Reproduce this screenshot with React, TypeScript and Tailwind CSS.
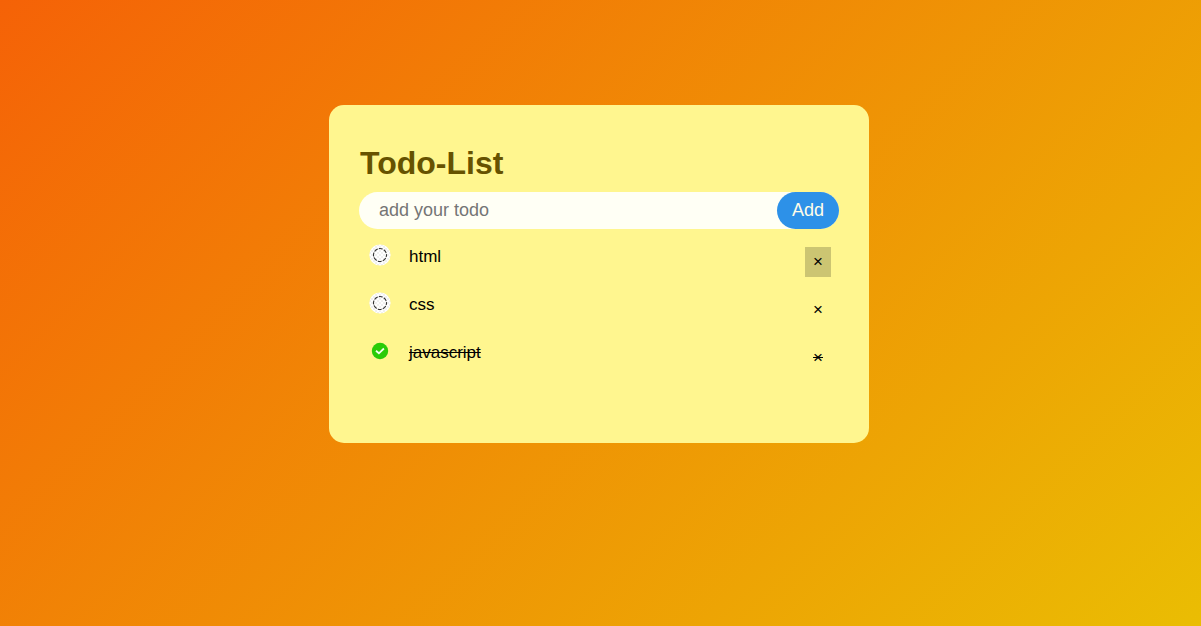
import { useState } from "react";

type Todo = { id: number; text: string; done: boolean };

const initialTodos: Todo[] = [
  { id: 1, text: "html", done: false },
  { id: 2, text: "css", done: false },
  { id: 3, text: "javascript", done: true },
];

function OpenIcon() {
  return (
    <svg width="22" height="22" viewBox="0 0 22 22" aria-hidden="true">
      <defs>
        <pattern id="checks" width="4" height="4" patternUnits="userSpaceOnUse">
          <rect width="4" height="4" fill="#ffffff" />
          <rect width="2" height="2" fill="#f0f0f0" />
          <rect x="2" y="2" width="2" height="2" fill="#f0f0f0" />
        </pattern>
      </defs>
      <circle cx="11" cy="11" r="10.6" fill="url(#checks)" />
      <circle
        cx="11"
        cy="11"
        r="6.5"
        fill="none"
        stroke="#333333"
        strokeWidth="1.1"
        strokeDasharray="3.8 1.305"
        strokeDashoffset="1.9"
      />
    </svg>
  );
}

function DoneIcon() {
  return (
    <svg width="22" height="22" viewBox="0 0 22 22" aria-hidden="true">
      <circle cx="11" cy="11" r="8.2" fill="#2acb08" />
      <path
        d="M7 10.8 L9.9 13.3 L14.9 8.5"
        fill="none"
        stroke="#f4fff0"
        strokeWidth="1.8"
      />
    </svg>
  );
}

export default function App() {
  const [todos, setTodos] = useState(initialTodos);
  const [draft, setDraft] = useState("");

  const toggle = (id: number) =>
    setTodos(todos.map((t) => (t.id === id ? { ...t, done: !t.done } : t)));

  const add = () => {
    if (!draft.trim()) return;
    setTodos([...todos, { id: Date.now(), text: draft, done: false }]);
    setDraft("");
  };

  return (
    <div className="min-h-screen bg-linear-[135deg,#f56207,#eabd03] pt-[105px] pr-[3px] font-['Liberation_Sans',Arial,sans-serif]">
      <main className="mx-auto w-full max-w-[540px] rounded-[15px] bg-[#fff68f] px-[30px] pt-10 pb-[65px]">
        <h1 className="mb-[11px] pl-px text-[32px] leading-9 font-bold text-[#665200]">
          Todo-List
        </h1>
        <form
          className="flex rounded-full bg-[#fffff5]"
          onSubmit={(e) => {
            e.preventDefault();
            add();
          }}
        >
          <input
            type="text"
            aria-label="New todo"
            placeholder="add your todo"
            value={draft}
            onChange={(e) => setDraft(e.target.value)}
            className="min-w-0 flex-1 bg-transparent pb-[2px] pl-5 text-[18px] leading-5 outline-none placeholder:text-[#757575]"
          />
          <button
            type="submit"
            className="h-[37px] rounded-full bg-[#2d91e8] px-[15px] pb-[2px] text-[18px] leading-5 text-[#fffde8]"
          >
            Add
          </button>
        </form>
        <ul className="mt-[5px]">
          {todos.map((todo, i) => (
            <li
              key={todo.id}
              className="flex h-12 items-start pt-[10px] pr-2 pl-[10px] text-[17px] leading-5 text-black"
            >
              <label
                className={`flex flex-1 cursor-pointer gap-[18px] ${todo.done ? "line-through" : ""}`}
              >
                <input
                  type="checkbox"
                  checked={todo.done}
                  onChange={() => toggle(todo.id)}
                  className="sr-only"
                />
                {todo.done ? <DoneIcon /> : <OpenIcon />}
                <span className="pt-[3px]">{todo.text}</span>
              </label>
              <button
                type="button"
                aria-label={`Delete ${todo.text}`}
                onClick={() => setTodos(todos.filter((t) => t.id !== todo.id))}
                className={`mt-[3px] h-[30px] px-2 ${i === 0 ? "bg-[#ccc572]" : ""} ${todo.done ? "line-through" : ""}`}
              >
                ×
              </button>
            </li>
          ))}
        </ul>
      </main>
    </div>
  );
}
